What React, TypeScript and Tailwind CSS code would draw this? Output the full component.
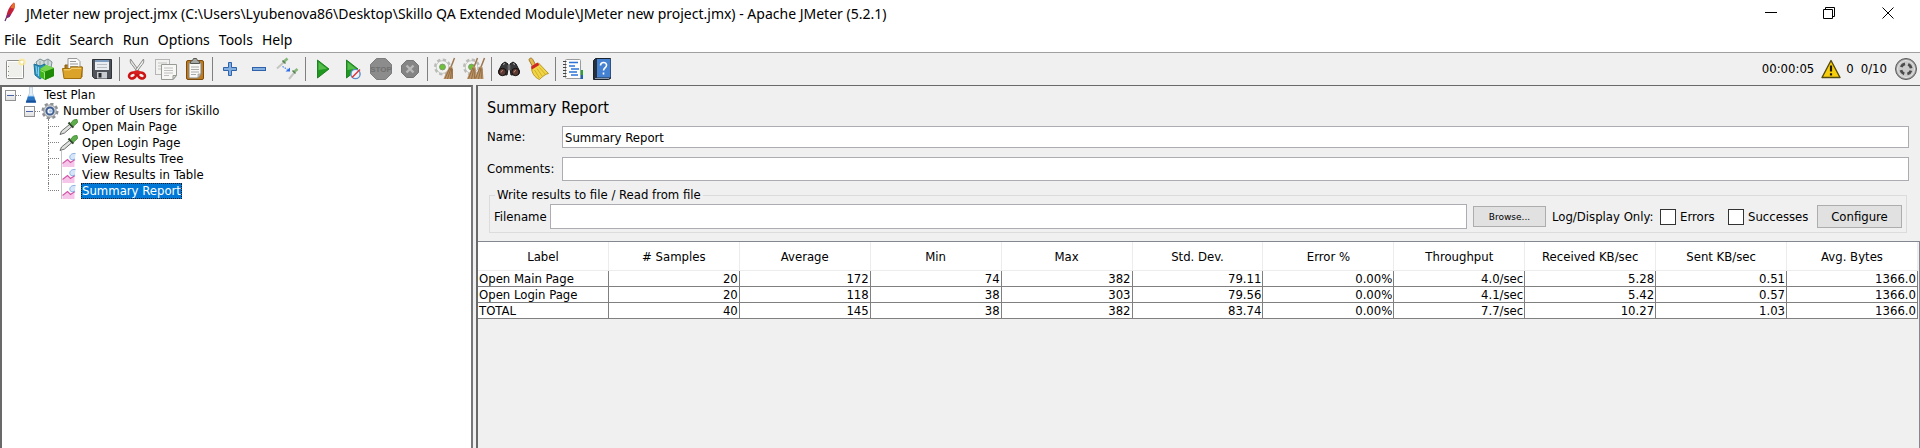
import React from "react";

type IconProps = { children: React.ReactNode; size?: string; box?: string };

function Glyph({ children, size = "size-6", box = "0 0 24 24" }: IconProps) {
  return (
    <svg viewBox={box} className={`${size} shrink-0`} aria-hidden="true" fill="none">
      {children}
    </svg>
  );
}

const NewIcon = () => (
  <Glyph>
    <rect x="3.500" y="3.500" width="17" height="18" rx="1" fill="#efefec" stroke="#8c8e88" />
    <rect x="4.500" y="4.500" width="15" height="16" stroke="#fff" />
    <path d="M5.500 9v1M5.500 14v1M5.500 18v1" stroke="#888" />
    <circle cx="19" cy="5" r="3.600" fill="#fbe88a" opacity=".8" />
    <circle cx="19" cy="5" r="1.600" fill="#fff" />
  </Glyph>
);

const TemplatesIcon = () => (
  <Glyph>
    <path d="M4 5l4-3 4 2 4-2 4 3-1 6H6z" fill="#cfdadd" stroke="#7c8e93" />
    <path d="M8 4v5M12 4v5M16 3v5" stroke="#92a5aa" />
    <path d="M2 7l6 2 5-2v11l-5 4-5-4z" fill="#2e93bd" stroke="#1d6f95" />
    <path d="M4 9l1 8M6.500 10v9" stroke="#8bd0ea" />
    <path d="M8 12l6-4 8 3v8l-9 4-5-3z" fill="#3fb41d" />
    <path d="M13 14.500l9-3.500v8l-9 4z" fill="#1e8a08" />
    <path d="M8 12l6-4 8 3-9 3.500z" fill="#7ad44f" />
    <path d="M8.500 13.500l4 2v6" stroke="#9be877" />
  </Glyph>
);

const OpenIcon = () => (
  <Glyph>
    <path d="M4 8h4l2 2h11v10H4z" fill="#b07a0f" stroke="#8a5d08" />
    <path d="M7 1.500h9l3 3V13H7z" fill="#fafafa" stroke="#999" />
    <path d="M9 4.500h6M9 7h8M9 9.500h8" stroke="#999" />
    <path d="M1.500 11.500h7l2-1.500h11l-1.500 11.500H3z" fill="#dca32b" stroke="#a06f0c" />
    <path d="M3 12.800h6l2-1.500h9" stroke="#f9d97d" />
  </Glyph>
);

const SaveIcon = () => (
  <Glyph>
    <path d="M2.500 2.500h19v19h-17l-2-2z" fill="#50545a" stroke="#303338" />
    <rect x="5" y="3" width="14" height="10" fill="#e9edf1" />
    <path d="M5 3h14v2H5z" fill="#7d9cc0" />
    <path d="M7 7.500h10M7 10.500h10" stroke="#b7bcc2" />
    <rect x="7" y="15" width="10" height="6.500" fill="#c9ccd0" />
    <rect x="8.500" y="16" width="3" height="4.500" fill="#2b2d30" />
  </Glyph>
);

const CutIcon = () => (
  <Glyph>
    <path d="M5.500 2c-1 3 .5 5 2.500 7l5 7 1.500-1.500z" fill="#e4e5e3" stroke="#8b8d89" />
    <path d="M18.500 2c1 3-.5 5-2.500 7l-5 7-1.500-1.500z" fill="#f1f1f0" stroke="#8b8d89" />
    <ellipse cx="7.500" cy="18.500" rx="3.600" ry="2.800" stroke="#cc1414" strokeWidth="2.600" transform="rotate(-25 7.500 18.500)" />
    <ellipse cx="16.500" cy="18.500" rx="3.600" ry="2.800" stroke="#cc1414" strokeWidth="2.600" transform="rotate(25 16.500 18.500)" />
    <path d="M8 15l4-2 4 2-1.500 2h-5z" fill="#d82020" />
  </Glyph>
);

const CopyIcon = () => (
  <Glyph>
    <rect x="1.500" y="2.500" width="14" height="15" fill="#f2f2f1" stroke="#b5b6b3" />
    <path d="M4 6h9M4 9h4M4 12h4" stroke="#c3c4c1" />
    <path d="M7.500 7.500h15v11l-3.500 4H7.500z" fill="#f7f7f6" stroke="#989a95" />
    <path d="M10 11h9M10 13.500h9M10 16h9M10 18.500h5" stroke="#c0c1be" />
    <path d="M19 22.500v-4h3.500z" fill="#d5d6d3" stroke="#989a95" />
  </Glyph>
);

const PasteIcon = () => (
  <Glyph>
    <rect x="3.500" y="3.500" width="17" height="19" rx="1.500" fill="#bd7a20" stroke="#7e4c0b" />
    <path d="M6 6h12v11l-3 4H6z" fill="#f8f8f7" stroke="#87877f" />
    <path d="M8 10h8M8 12.500h8M8 15h8M8 17.500h5" stroke="#aaaba7" />
    <path d="M15 21v-4h3z" fill="#cfcfca" stroke="#87877f" strokeWidth=".6" />
    <path d="M7.500 6.500v-2l2-1 1-2h3l1 2 2 1v2z" fill="#a5a7a2" stroke="#555753" />
  </Glyph>
);

const PlusIcon = () => (
  <Glyph>
    <path d="M10.500 5.500h3v5h5v3h-5v5h-3v-5h-5v-3h5z" fill="#83aee0" stroke="#2f62a8" />
  </Glyph>
);

const MinusIcon = () => (
  <Glyph>
    <rect x="5.500" y="10.500" width="13" height="3" fill="#83aee0" stroke="#2f62a8" />
  </Glyph>
);

const ToggleIcon = () => (
  <Glyph>
    <path d="M1 11.500l6.500-6" stroke="#c4c6c2" strokeWidth="2" />
    <path d="M7 5.500l4.500-4" stroke="#83b878" strokeWidth="2.600" />
    <path d="M6.500 3.500l3 3" stroke="#5d7d57" strokeWidth="1.400" />
    <path d="M13 22l5-6" stroke="#c4c6c2" strokeWidth="2" />
    <path d="M17.500 15.500l4-3.500" stroke="#83b878" strokeWidth="2.600" />
    <path d="M16.500 13.500l3 3" stroke="#5d7d57" strokeWidth="1.400" />
    <path d="M6.500 9.500l5 3" stroke="#4a83e8" strokeWidth="1.200" strokeDasharray="1.500 1" />
    <path d="M9.500 14.500h4.500v-4z" fill="#2d6fe6" />
  </Glyph>
);

const PlayShape = () => (
  <>
    <path d="M6.500 3l11.500 9-11.500 9z" fill="#1f981f" stroke="#08700b" strokeWidth=".8" />
    <path d="M7.500 5l8.500 6.800-8.500 1.200z" fill="#55bd4b" />
  </>
);

const StartIcon = () => (
  <Glyph>
    <PlayShape />
  </Glyph>
);

const StartNoTimersIcon = () => (
  <Glyph>
    <PlayShape />
    <circle cx="15.500" cy="17" r="4.600" fill="#eef4fb" stroke="#5d8ec7" strokeWidth="1.400" />
    <path d="M12 20.500l8-8" stroke="#d33" strokeWidth="1.500" />
  </Glyph>
);

const StopIcon = () => (
  <Glyph>
    <path d="M7.500 1.500h9l6 6v9l-6 6h-9l-6-6v-9z" fill="#8c8c8c" stroke="#7d7d7d" />
    <text x="12" y="15" textAnchor="middle" fontSize="8" fontWeight="700" fill="#707070" className="font-['Liberation_Sans',sans-serif]">
      STOP
    </text>
  </Glyph>
);

const ShutdownIcon = () => (
  <Glyph>
    <path d="M8.500 3.500h7l5 5v7l-5 5h-7l-5-5v-7z" fill="#858585" stroke="#757575" />
    <path d="M8.500 8.500l7 7M15.500 8.500l-7 7" stroke="#b8b8b8" strokeWidth="2.400" />
  </Glyph>
);

const GearShape = () => (
  <>
    <circle cx="9.500" cy="10" r="7" stroke="#b9bbb7" strokeWidth="3" strokeDasharray="3.200 2.300" />
    <circle cx="9.500" cy="10" r="6.300" fill="#f3f4f2" stroke="#b9bbb7" strokeWidth=".8" />
    <circle cx="9.500" cy="10" r="2.900" fill="#6cc234" stroke="#7f9a70" />
  </>
);

const ClearIcon = () => (
  <Glyph>
    <GearShape />
    <path d="M21.500 1l-3.500 9" stroke="#9c7650" strokeWidth="1.500" />
    <path d="M17 9l2.500 1 .5 12h-9.500c1.500-4 4-9 6.500-13z" fill="#bb9468" />
    <path d="M17 10.500l-5 11M18 11l-3.500 11M18.800 11l-1.300 11M19.400 12v9" stroke="#8a6239" strokeWidth=".8" />
  </Glyph>
);

const ClearAllIcon = () => (
  <Glyph>
    <GearShape />
    <path d="M15.500 1l-3.500 9M22.500 1l-3.500 9" stroke="#9c7650" strokeWidth="1.500" />
    <path d="M11 9l2.500 1 .5 12H5c1.500-4 3.500-9 6-13z" fill="#bb9468" />
    <path d="M18 9l2.500 1 1 12h-9c1.500-4 3.500-9 5.500-13z" fill="#bb9468" />
    <path d="M11 10.500l-4.500 11M12 11L9.500 22M13 11.500l-.5 10M18 10.500l-4.500 11M19 11l-2.500 11M20 11.500l-.3 10" stroke="#8a6239" strokeWidth=".8" />
  </Glyph>
);

const SearchIcon = () => (
  <Glyph>
    <path d="M5 7l3-2 3 2v5l-1 6-8-1-.5-3z" fill="#39393b" stroke="#161617" />
    <path d="M19 7l-3-2-3 2v5l1 6 8-1 .5-3z" fill="#39393b" stroke="#161617" />
    <rect x="10.500" y="8" width="3" height="5" fill="#6d6d70" />
    <circle cx="5.500" cy="15" r="3.700" fill="#5b3a33" stroke="#0f0f10" />
    <circle cx="18.500" cy="15" r="3.700" fill="#5b3a33" stroke="#0f0f10" />
    <path d="M4 15.500a2 2 0 0 1 2-2M17 15.500a2 2 0 0 1 2-2" stroke="#c28b79" />
    <path d="M6 7.500l2-1M16 6.500l2 1" stroke="#b0b0b0" />
  </Glyph>
);

const BroomIcon = () => (
  <Glyph>
    <path d="M3 3c0-2.500 3.500-2.500 4 0l2.500 4.500-3 2z" fill="#e7b94c" stroke="#8f6410" strokeWidth=".8" />
    <path d="M5.500 10.500l7-4.500 10 10.500c-3 .5-6 3-9 6-5-2-8-7-8-12z" fill="#f0d545" stroke="#a98512" strokeWidth=".8" />
    <path d="M5 9.500L11.500 5.500l1.800 2.500L6 12.500z" fill="#cf2626" />
    <path d="M8.500 13l5 8M11 11.500l5 7.500M13.500 10.500l6 7" stroke="#cfa92a" strokeWidth=".9" />
  </Glyph>
);

const FunctionIcon = () => (
  <Glyph>
    <rect x="18" y="13" width="4" height="5" fill="#21a82f" />
    <rect x="18" y="18" width="4" height="4" fill="#1763c2" />
    <rect x="4.500" y="2.500" width="15" height="19" rx="1" fill="#fdfdfd" stroke="#9b9b9b" />
    <path d="M8 5.500h9M8 9h6M10 12h8M8 15h8M10 18h7" stroke="#2d73d6" strokeWidth="1.400" />
    <path d="M2 4.500h3.500M2 7.500h3.500M2 10.500h3.500M2 13.500h3.500M2 16.500h3.500M2 19.500h3.500" stroke="#444" />
  </Glyph>
);

const HelpIcon = () => (
  <Glyph>
    <path d="M3.500 3.500l2-2h15v20l-2 1h-15z" fill="#27313d" stroke="#1a222c" />
    <rect x="7" y="2" width="13.500" height="18.500" fill="#4581d1" />
    <path d="M5 21.500h14" stroke="#8c9aab" />
    <path d="M10.500 8.500c0-4 6.500-4 6 0 0 2-3 2.200-3 5M13.500 15.500v2" stroke="#fff" strokeWidth="1.600" />
  </Glyph>
);

const FeatherIcon = () => (
  <Glyph size="h-5 w-3" box="0 0 12 20">
    <path d="M1 19L4 12" stroke="#5c2c63" strokeWidth="1.200" />
    <path d="M10 .5c1.500 2 1 5-.5 8L5.500 15l-3 1C2 11 6 3 10 .5z" fill="#c3203a" />
    <path d="M10 .5c1.500 2 1 4 .2 6L6.500 6C7.500 3.500 8.600 1.500 10 .5z" fill="#e8702a" />
    <path d="M3 13l-.5 3 3-1 1.500-3z" fill="#7b2a7e" />
  </Glyph>
);

const FlaskIcon = () => (
  <Glyph size="h-4 w-5" box="0 0 20 16">
    <path d="M8.500 0h3v6l3.500 9.500H5L8.500 6z" fill="#e4eef7" stroke="#b9cadb" strokeWidth=".8" />
    <path d="M7 9h6l2 6.500H5z" fill="#2a74c4" />
    <path d="M5.500 13.500h9l.5 2H5z" fill="#154e96" />
    <path d="M7 9.300h6" stroke="#6fb0ec" />
  </Glyph>
);

const ThreadIcon = () => (
  <Glyph size="h-4 w-5" box="0 0 20 16">
    <circle cx="10" cy="8" r="7.200" stroke="#8d9093" strokeWidth="2.600" strokeDasharray="3.200 2.455" />
    <circle cx="10" cy="8" r="6.200" fill="#d6d7d9" stroke="#96989b" />
    <circle cx="10" cy="8" r="3.600" fill="#f1f5fa" stroke="#3f5f92" strokeWidth="2" />
    <circle cx="10.500" cy="8" r="1.500" fill="#a9c3e4" />
  </Glyph>
);

const SamplerIcon = () => (
  <Glyph size="h-4 w-5" box="0 0 20 16">
    <path d="M1 15.500l1.500-3.500 8-6.500 2.500 2-7.500 6.500z" fill="#dfe1df" stroke="#5a5d5a" strokeWidth=".9" />
    <path d="M9.500 3.500l5 5" stroke="#33452f" strokeWidth="2.200" />
    <path d="M11.500 4.500L14.500 1l3.500-.5.500 3-4 3.500z" fill="#5fae4c" stroke="#4a8f3b" />
  </Glyph>
);

const ListenerIcon = () => (
  <Glyph size="h-4 w-5" box="0 0 20 16">
    <path d="M2.500 0v16" stroke="#c4c4c4" />
    <path d="M3.500 13l5-4.500 3 3 4-3v7.500h-12z" fill="#f6c6ea" />
    <path d="M3.500 12.500l5-4 3 3 4.500-3" stroke="#d257a8" strokeWidth="1.200" />
    <path d="M16.500 2.500c-4-.5-6.500 2-5.500 5l2 1.500 3-1" fill="#d6e6fa" stroke="#8db0e0" />
  </Glyph>
);

const WarningIcon = () => (
  <Glyph size="size-5" box="0 0 20 20">
    <path d="M10 1.500L19 18.500H1z" fill="#f8ce0c" stroke="#554a12" strokeWidth="1.400" strokeLinejoin="round" />
    <path d="M10 6.500v6M10 14.200v2.200" stroke="#1e1a05" strokeWidth="2.200" />
  </Glyph>
);

const StatusIcon = () => (
  <Glyph>
    <circle cx="12" cy="12" r="10.500" fill="#a5a5a5" stroke="#5a5a5a" />
    <circle cx="12" cy="12" r="8.500" fill="#c9c9c9" stroke="#e6e6e6" />
    <circle cx="12" cy="12" r="5.200" stroke="#4b4b4b" strokeWidth="2.800" strokeDasharray="4.900 3.268" strokeDashoffset="-1.630" />
  </Glyph>
);

const toolGroups: { label: string; icon: React.ReactNode }[][] = [
  [
    { label: "New", icon: <NewIcon /> },
    { label: "Templates", icon: <TemplatesIcon /> },
    { label: "Open", icon: <OpenIcon /> },
    { label: "Save", icon: <SaveIcon /> },
  ],
  [
    { label: "Cut", icon: <CutIcon /> },
    { label: "Copy", icon: <CopyIcon /> },
    { label: "Paste", icon: <PasteIcon /> },
  ],
  [
    { label: "Expand all", icon: <PlusIcon /> },
    { label: "Collapse all", icon: <MinusIcon /> },
    { label: "Toggle", icon: <ToggleIcon /> },
  ],
  [
    { label: "Start", icon: <StartIcon /> },
    { label: "Start no pauses", icon: <StartNoTimersIcon /> },
    { label: "Stop", icon: <StopIcon /> },
    { label: "Shutdown", icon: <ShutdownIcon /> },
  ],
  [
    { label: "Clear", icon: <ClearIcon /> },
    { label: "Clear all", icon: <ClearAllIcon /> },
  ],
  [
    { label: "Search tree", icon: <SearchIcon /> },
    { label: "Reset search", icon: <BroomIcon /> },
  ],
  [
    { label: "Function helper", icon: <FunctionIcon /> },
    { label: "Help contents", icon: <HelpIcon /> },
  ],
];

const menus = ["File", "Edit", "Search", "Run", "Options", "Tools", "Help"];

function TitleBar() {
  return (
    <header className="flex h-7 items-start bg-white pl-1 pt-[2px] font-['Noto_Sans',sans-serif] text-black">
      <FeatherIcon />
      <h1 className="ml-[10px] flex-1 text-[14px] leading-6">
        JMeter new project.jmx (C:\Users\Lyubenova86\Desktop\Skillo QA Extended Module\JMeter new project.jmx) - Apache
        JMeter (5.2.1)
      </h1>
      <div className="flex h-[22px] pr-[2px]">
        <button aria-label="Minimize" className="flex w-[58px] items-center justify-center">
          <Glyph size="size-3" box="0 0 12 12">
            <path d="M0 5.500h12" stroke="#000" />
          </Glyph>
        </button>
        <button aria-label="Restore" className="flex w-[58px] items-center justify-center">
          <Glyph size="size-3" box="0 0 12 12">
            <path d="M.5 2.500h9v9h-9zM2.500 2.500v-2h9v9h-2" stroke="#000" />
          </Glyph>
        </button>
        <button aria-label="Close" className="flex w-[60px] items-center justify-center">
          <Glyph size="size-3" box="0 0 12 12">
            <path d="M.5.5l11 11M11.500.5l-11 11" stroke="#000" />
          </Glyph>
        </button>
      </div>
    </header>
  );
}

function MenuBar() {
  return (
    <nav className="flex h-[25px] items-end gap-[9px] border-b border-[#a0a0a0] bg-white pl-1 font-['Noto_Sans',sans-serif] text-[14px] leading-6 text-black">
      {menus.map((m) => (
        <button key={m}>{m}</button>
      ))}
    </nav>
  );
}

function ToolBar() {
  return (
    <div className="flex h-8 items-center justify-between pr-[2px]">
      <div className="flex items-center">
        {toolGroups.map((group, i) => (
          <React.Fragment key={i}>
            {i > 0 && <span className="ml-[3px] mr-[2px] h-6 w-px bg-[#808080]" />}
            {group.map((t) => (
              <button key={t.label} aria-label={t.label} className="flex w-[29px] justify-center">
                {t.icon}
              </button>
            ))}
          </React.Fragment>
        ))}
      </div>
      <div className="flex items-center">
        <span className="mr-[7px]">00:00:05</span>
        <WarningIcon />
        <span className="ml-[5px]">0</span>
        <span className="ml-[7px] mr-[7px]">0/10</span>
        <StatusIcon />
      </div>
    </div>
  );
}

function Expander() {
  return (
    <button
      aria-label="Collapse"
      className="flex size-[11px] shrink-0 items-center justify-center border border-[#919191] bg-linear-to-b from-white to-[#e0e0e0]"
    >
      <span className="h-px w-[7px] bg-[#4b63a7]" />
    </button>
  );
}

const Dots = () => <span className="w-[5px] border-t border-dotted border-[#808080]" />;

const leaves = [
  { name: "Open Main Page", icon: <SamplerIcon /> },
  { name: "Open Login Page", icon: <SamplerIcon /> },
  { name: "View Results Tree", icon: <ListenerIcon /> },
  { name: "View Results in Table", icon: <ListenerIcon /> },
  { name: "Summary Report", icon: <ListenerIcon />, selected: true },
];

function TestTree() {
  return (
    <aside className="w-[473px] shrink-0 border-2 border-b-0 border-[#75777b] border-l-[#696969] border-t-[#696969] bg-white">
      <ul>
        <li>
          <div className="flex h-4 items-center pl-[3px]">
            <Expander />
            <Dots />
            <FlaskIcon />
            <span className="pl-[3px]">Test Plan</span>
          </div>
          <ul>
            <li>
              <div className="flex h-4 items-center pl-[22px]">
                <Expander />
                <Dots />
                <ThreadIcon />
                <span className="pl-[3px]">Number of Users for iSkillo</span>
              </div>
              <ul>
                {leaves.map((leaf, i) => (
                  <li key={leaf.name} className="flex h-4 items-center pl-[46px]">
                    <span className="flex h-4 w-[11px] shrink-0 flex-col">
                      <span className="h-2 border-b border-l border-dotted border-[#808080]" />
                      {i < leaves.length - 1 && <span className="h-2 border-l border-dotted border-[#808080]" />}
                    </span>
                    {leaf.icon}
                    <span
                      className={
                        leaf.selected
                          ? "ml-[2px] h-4 bg-[#0078d7] px-px text-white outline-1 -outline-offset-1 outline-dotted outline-[#1a1a1a]"
                          : "ml-[2px] px-px"
                      }
                    >
                      {leaf.name}
                    </span>
                  </li>
                ))}
              </ul>
            </li>
          </ul>
        </li>
      </ul>
    </aside>
  );
}

const columns = [
  "Label",
  "# Samples",
  "Average",
  "Min",
  "Max",
  "Std. Dev.",
  "Error %",
  "Throughput",
  "Received KB/sec",
  "Sent KB/sec",
  "Avg. Bytes",
];

const rows = [
  ["Open Main Page", "20", "172", "74", "382", "79.11", "0.00%", "4.0/sec", "5.28", "0.51", "1366.0"],
  ["Open Login Page", "20", "118", "38", "303", "79.56", "0.00%", "4.1/sec", "5.42", "0.57", "1366.0"],
  ["TOTAL", "40", "145", "38", "382", "83.74", "0.00%", "7.7/sec", "10.27", "1.03", "1366.0"],
];

function ResultsTable() {
  return (
    <div className="flex-1 border-r border-t border-[#828790] pr-px">
      <table className="w-full table-fixed border-separate border-spacing-0">
        <thead>
          <tr>
            {columns.map((c) => (
              <th
                key={c}
                scope="col"
                className="h-[29px] border-b border-r border-[#ececec] bg-white p-0 pt-px text-center font-normal"
              >
                {c}
              </th>
            ))}
          </tr>
        </thead>
        <tbody>
          {rows.map((r) => (
            <tr key={r[0]}>
              {r.map((v, i) => (
                <td
                  key={i}
                  className={
                    i === 0
                      ? "h-4 border-b border-r border-[#808080] bg-white p-0 pl-px text-left leading-[15px]"
                      : "h-4 border-b border-r border-[#808080] bg-white p-0 pr-px text-right leading-[15px]"
                  }
                >
                  {v}
                </td>
              ))}
            </tr>
          ))}
        </tbody>
      </table>
    </div>
  );
}

function ReportPanel() {
  return (
    <main className="flex min-w-0 flex-1 flex-col border-l-2 border-t border-[#696969]">
      <section className="flex flex-col pl-[9px] pr-[11px] pt-2">
        <h2 className="h-8 text-[16px] leading-7">Summary Report</h2>
        <div className="flex items-center">
          <label htmlFor="name" className="w-[75px] shrink-0">
            Name:
          </label>
          <input
            id="name"
            defaultValue="Summary Report"
            className="h-[22px] min-w-0 flex-1 border border-[#abadb3] bg-white px-[2px] outline-none"
          />
        </div>
        <div className="mt-[9px] flex items-center">
          <label htmlFor="comments" className="w-[75px] shrink-0">
            Comments:
          </label>
          <input id="comments" className="h-6 min-w-0 flex-1 border border-[#abadb3] bg-white px-[2px] outline-none" />
        </div>
        <fieldset className="mx-[2px] mt-[6px] min-w-0 border border-[#dcdcdc] px-1 pb-[3px] pt-px">
          <legend className="ml-px px-[2px] leading-4">Write results to file / Read from file</legend>
          <div className="flex items-center">
            <label htmlFor="filename" className="w-[56px] shrink-0">
              Filename
            </label>
            <input id="filename" className="h-[25px] min-w-0 flex-1 border border-[#abadb3] bg-white px-[2px] outline-none" />
            <button className="ml-[6px] h-[21px] w-[73px] border border-[#adadad] bg-[#e1e1e1] font-['DejaVu_Sans',sans-serif] text-[9px]">
              Browse...
            </button>
            <span className="ml-[6px] w-[108px] whitespace-nowrap">Log/Display Only:</span>
            <label className="flex w-[68px] items-center gap-1">
              <input type="checkbox" className="size-4 appearance-none border border-[#333] bg-white" />
              Errors
            </label>
            <label className="flex w-[89px] items-center gap-1">
              <input type="checkbox" className="size-4 appearance-none border border-[#333] bg-white" />
              Successes
            </label>
            <button className="h-[23px] w-[85px] border border-[#adadad] bg-[#e1e1e1]">Configure</button>
          </div>
        </fieldset>
      </section>
      <div className="mt-2 flex flex-1 flex-col">
        <ResultsTable />
      </div>
    </main>
  );
}

export default function App() {
  return (
    <div className="flex min-h-screen flex-col bg-[#f0f0f0] font-['DejaVu_Sans_Condensed','DejaVu_Sans',sans-serif] text-[13px] leading-4 text-black">
      <TitleBar />
      <MenuBar />
      <ToolBar />
      <div className="flex flex-1 gap-[3px]">
        <TestTree />
        <ReportPanel />
      </div>
    </div>
  );
}
